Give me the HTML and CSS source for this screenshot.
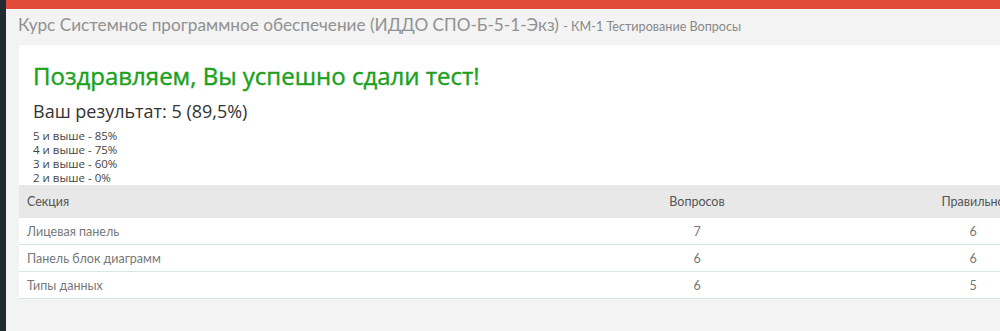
FILE: index.html
```html
<!DOCTYPE html>
<html lang="ru">
<head>
<meta charset="UTF-8">
<title>Результат теста</title>
<link rel="stylesheet" href="styles.css">
</head>
<body>

<div class="sidebar"></div>

<div class="main">
    <div class="topbar"></div>

    <div class="page-title">
        Курс Системное программное обеспечение (ИДДО СПО-Б-5-1-Экз)
        <small>- КМ-1 Тестирование Вопросы</small>
    </div>

    <div class="card">
        <h1 class="success">Поздравляем, Вы успешно сдали тест!</h1>
        <div class="result">Ваш результат: 5 (89,5%)</div>
        <div class="scale">
            <div>5 и выше - 85%</div>
            <div>4 и выше - 75%</div>
            <div>3 и выше - 60%</div>
            <div>2 и выше - 0%</div>
        </div>

        <table class="sections">
            <thead>
                <tr>
                    <th class="name">Секция</th>
                    <th class="num">Вопросов</th>
                    <th class="num">Правильно</th>
                    <th></th>
                </tr>
            </thead>
            <tbody>
                <tr>
                    <td>Лицевая панель</td>
                    <td class="num">7</td>
                    <td class="num">6</td>
                    <td></td>
                </tr>
                <tr>
                    <td>Панель блок диаграмм</td>
                    <td class="num">6</td>
                    <td class="num">6</td>
                    <td></td>
                </tr>
                <tr>
                    <td>Типы данных</td>
                    <td class="num">6</td>
                    <td class="num">5</td>
                    <td></td>
                </tr>
            </tbody>
        </table>
    </div>
</div>

</body>
</html>
```

FILE: styles.css
```css
html, body {
    margin: 0;
    height: 100%;
    overflow: hidden;
}
body {
    display: flex;
    background-color: #f3f3f3;
    font-family: Lato, "Open Sans", sans-serif;
}
.sidebar {
    width: 6px;
    flex-shrink: 0;
    background-color: #1f2b30;
}
.main {
    flex: 1;
    min-width: 0;
}
.topbar {
    height: 9px;
    background-color: #e04b3a;
}
.page-title {
    padding: 5px 0 0 12px;
    height: 36px;
    box-sizing: border-box;
    font-size: 17.2px;
    color: #919191;
    white-space: nowrap;
}
.page-title small {
    font-size: 12.6px;
    color: #888;
}
.card {
    margin-left: 13px;
    width: 1300px;
    background-color: #fff;
    padding: 14px 0 0 0;
}
.success {
    margin: 0 0 0 14px;
    font-family: "Open Sans", sans-serif;
    font-weight: 400;
    font-size: 24px;
    line-height: 34px;
    color: #1ba11b;
    -webkit-text-stroke: 0.4px #1ba11b;
}
.result {
    margin: 5px 0 0 14px;
    font-family: "Open Sans", sans-serif;
    font-size: 18px;
    line-height: 26px;
    color: #333;
}
.scale {
    margin: 5px 0 0 14px;
    font-family: "Open Sans", sans-serif;
    font-size: 11.5px;
    line-height: 14px;
    color: #444;
}
.sections {
    width: 100%;
    margin-top: 0;
    border-collapse: collapse;
    font-size: 12.5px;
    color: #777;
}
.sections th {
    height: 33px;
    padding: 0 8px;
    font-weight: 400;
    color: #555;
    text-align: left;
    background-color: #e8e8e8;
}
.sections td {
    height: 26px;
    padding: 0 8px;
    border-bottom: 1px solid #d6e6e2;
}
.sections .name {
    width: 524px;
}
.sections .num {
    width: 260px;
    text-align: center;
}
```
